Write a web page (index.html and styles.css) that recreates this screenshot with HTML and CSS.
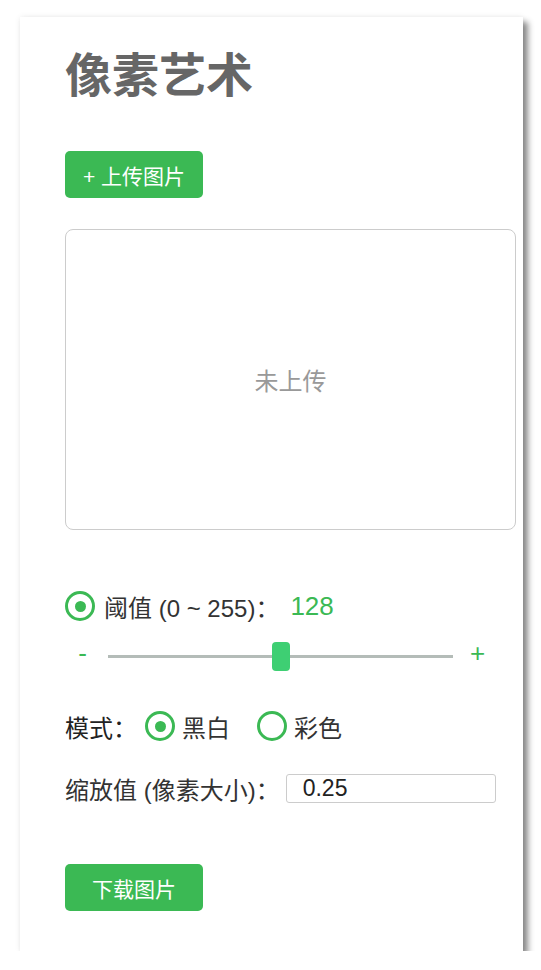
FILE: index.html
```html
<!DOCTYPE html>
<html lang="zh-CN">

<head>
    <meta charset="UTF-8">
    <meta name="viewport" content="width=device-width, initial-scale=1.0">
    <title>像素艺术</title>
    <link rel="stylesheet" href="styles.css">
</head>

<body>
    <div class="card">
        <h1 class="title">像素艺术</h1>

        <button class="btn">+ 上传图片</button>

        <div class="preview">
            <span class="preview-empty">未上传</span>
        </div>

        <div class="row threshold-row">
            <span class="radio checked"></span>
            <span class="label">阈值 (0 ~ 255)：</span>
            <span class="threshold-value">128</span>
        </div>

        <div class="row slider-row">
            <span class="step">-</span>
            <input type="range" class="slider" min="0" max="255" value="128">
            <span class="step plus">+</span>
        </div>

        <div class="row mode-row">
            <span class="label">模式：</span>
            <span class="option">
                <span class="radio checked"></span>
                <span class="label">黑白</span>
            </span>
            <span class="option">
                <span class="radio"></span>
                <span class="label">彩色</span>
            </span>
        </div>

        <div class="row scale-row">
            <span class="label">缩放值 (像素大小)：</span>
            <input type="text" class="scale-input" value="0.25">
        </div>

        <button class="btn download">下载图片</button>
    </div>
</body>

</html>
```

FILE: styles.css
```css
:root {
    --green: #3bb954;
    --thumb: #3ecf73;
    --text: #333333;
    --border: #cccccc;
}

* {
    margin: 0;
    padding: 0;
    box-sizing: border-box;
}

body {
    font-family: 'Liberation Sans', 'Noto Sans CJK SC', sans-serif;
    background-color: #ffffff;
    color: var(--text);
    padding: 17px 0 0 20px;
}

.card {
    width: 503px;
    height: 934px;
    padding: 0 7px 0 45px;
    background-color: #ffffff;
    box-shadow: 5px 5px 6px rgba(0, 0, 0, 0.45), 0 0 6px rgba(0, 0, 0, 0.08);
}

.title {
    font-size: 47px;
    line-height: 60px;
    font-weight: bold;
    color: #666666;
    padding-top: 29px;
}

.btn {
    display: block;
    width: 138px;
    height: 47px;
    margin-top: 45px;
    background-color: var(--green);
    color: #ffffff;
    border: none;
    border-radius: 5px;
    font-family: inherit;
    font-size: 21px;
}

.preview {
    height: 301px;
    margin-top: 31px;
    border: 1px solid var(--border);
    border-radius: 8px;
    display: flex;
    align-items: center;
    justify-content: center;
}

.preview-empty {
    font-size: 24px;
    color: #999999;
}

.row {
    display: flex;
    align-items: center;
}

.label {
    font-size: 24px;
}

.radio {
    width: 30px;
    height: 30px;
    border: 3px solid var(--green);
    border-radius: 50%;
    display: flex;
    align-items: center;
    justify-content: center;
    flex-shrink: 0;
}

.radio.checked::after {
    content: '';
    width: 11px;
    height: 11px;
    border-radius: 50%;
    background-color: var(--green);
}

.threshold-row {
    height: 30px;
    margin-top: 61px;
}

.threshold-row .radio {
    margin-right: 9px;
}

.threshold-value {
    font-size: 26px;
    color: var(--green);
    margin-left: 11px;
}

.slider-row {
    height: 30px;
    margin-top: 20px;
}

.step {
    width: 35px;
    text-align: center;
    font-size: 26px;
    line-height: 30px;
    color: var(--green);
    position: relative;
    top: -3px;
}

.plus {
    margin-left: 7px;
}

.slider {
    -webkit-appearance: none;
    appearance: none;
    width: 345px;
    height: 30px;
    margin-left: 8px;
    background: transparent;
    outline: none;
}

.slider::-webkit-slider-runnable-track {
    height: 3px;
    background-color: #b4bcb8;
}

.slider::-webkit-slider-thumb {
    -webkit-appearance: none;
    width: 18px;
    height: 29px;
    margin-top: -13px;
    border-radius: 4px;
    background-color: var(--thumb);
}

.mode-row {
    height: 30px;
    margin-top: 40px;
}

.mode-row > .label {
    color: #222222;
}

.option {
    display: flex;
    align-items: center;
    margin-left: 8px;
}

.option .radio {
    margin-right: 7px;
}

.option + .option {
    margin-left: 27px;
}

.scale-row {
    height: 30px;
    margin-top: 32px;
}

.scale-input {
    width: 210px;
    height: 29px;
    margin-left: 6px;
    padding-left: 16px;
    border: 1px solid var(--border);
    border-radius: 3px;
    font-family: inherit;
    font-size: 23px;
    color: #222222;
    outline: none;
}

.download {
    margin-top: 61px;
}
```
